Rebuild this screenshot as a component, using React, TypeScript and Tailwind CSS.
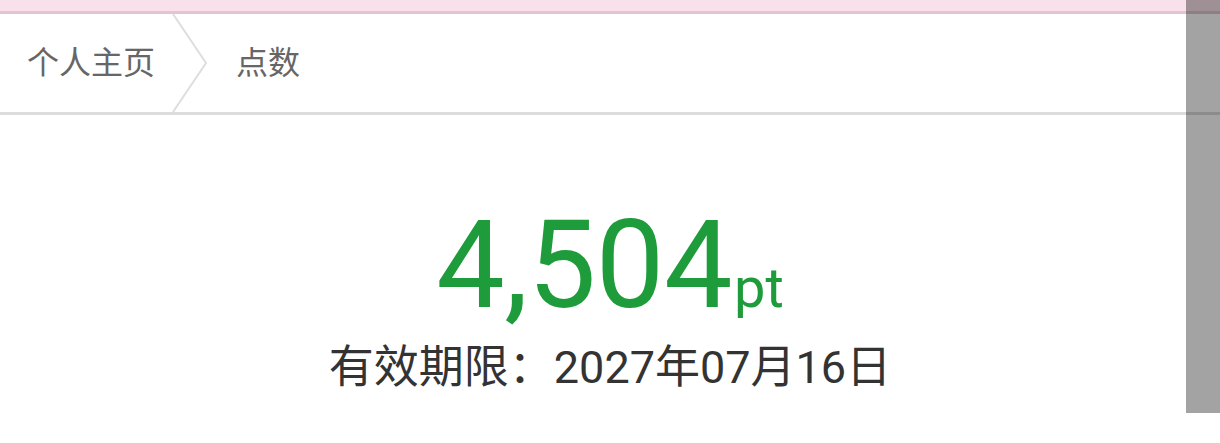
import React from 'react'

const FONT = "font-['Roboto','Noto_Sans_CJK_SC',sans-serif]"

function Breadcrumb() {
  return (
    <div className="flex h-[101px] items-stretch border-b-[3px] border-[#dcdcdc] bg-white">
      <div className="flex items-center pl-[27px] pr-[17px] text-[32px] text-[#666666]">个人主页</div>
      <svg width="36" height="98" viewBox="0 0 36 98" className="shrink-0">
        <polyline points="1,0 34,49 1,98" fill="none" stroke="#dedede" strokeWidth="2" />
      </svg>
      <div className="flex items-center pl-[28px] text-[32px] text-[#666666]">点数</div>
    </div>
  )
}

export default function App() {
  return (
    <div className={`relative h-[443px] w-[1220px] overflow-hidden bg-white ${FONT}`}>
      <div className="h-[14px] border-b-[3px] border-[#e2c5d1] bg-[#f8e1ea]" />
      <Breadcrumb />
      <div className="flex flex-col items-center pt-[90px]">
        <div className="flex items-baseline leading-none text-[#1e9c3b]">
          <span className="text-[122px] tracking-[-0.5px]">4,504</span>
          <span className="ml-[2px] text-[56px]">pt</span>
        </div>
        <div className="mt-[18px] text-[45px] leading-none text-[#333333]">有效期限：2027年07月16日</div>
      </div>
      <div className="absolute right-0 top-0 h-[413px] w-[34px] bg-black/[0.36]" />
    </div>
  )
}
